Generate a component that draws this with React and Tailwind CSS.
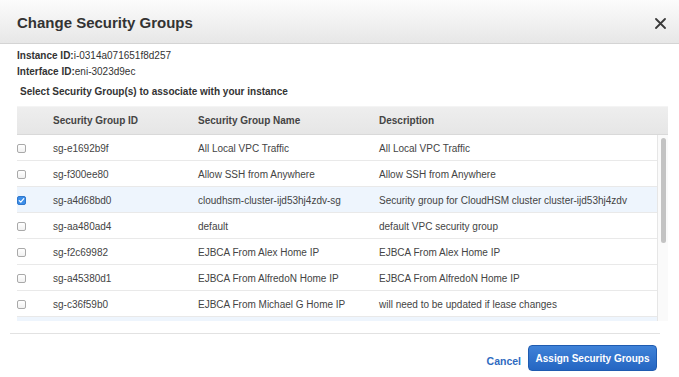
import React from "react";

const rows = [
  ["sg-e1692b9f", "All Local VPC Traffic", "All Local VPC Traffic", false],
  ["sg-f300ee80", "Allow SSH from Anywhere", "Allow SSH from Anywhere", false],
  ["sg-a4d68bd0", "cloudhsm-cluster-ijd53hj4zdv-sg", "Security group for CloudHSM cluster cluster-ijd53hj4zdv", true],
  ["sg-aa480ad4", "default", "default VPC security group", false],
  ["sg-f2c69982", "EJBCA From Alex Home IP", "EJBCA From Alex Home IP", false],
  ["sg-a45380d1", "EJBCA From AlfredoN Home IP", "EJBCA From AlfredoN Home IP", false],
  ["sg-c36f59b0", "EJBCA From Michael G Home IP", "will need to be updated if lease changes", false],
  ["", "", "", true],
];

function Checkbox({ checked }) {
  if (checked) {
    return (
      <div className="w-[9px] h-[9px] rounded-[2px] bg-[#3d8ee8] border border-[#2f77cc] flex items-center justify-center">
        <svg width="7" height="7" viewBox="0 0 7 7">
          <path d="M1.2 3.6 L2.8 5.1 L5.8 1.6" stroke="white" strokeWidth="1.2" fill="none" strokeLinecap="round" strokeLinejoin="round" />
        </svg>
      </div>
    );
  }
  return <div className="w-[9px] h-[9px] rounded-[2px] bg-gradient-to-b from-white to-[#f1f1f1] border border-[#a9a9a9]" />;
}

export default function App() {
  return (
    <div className="w-[679px] h-[377px] bg-white overflow-hidden font-['Liberation_Sans',Arial,sans-serif] text-[#333]">
      <div className="h-[44px] flex items-center justify-between pl-[17px] pr-[13px] pt-[3px] bg-gradient-to-b from-[#fcfcfc] to-[#e7e7e7] border-b border-[#d4d4d4]">
        <div className="text-[15px] font-bold text-[#333]">Change Security Groups</div>
        <svg width="11" height="11" viewBox="0 0 11 11">
          <path d="M1 1 L10 10 M10 1 L1 10" stroke="#3a3a3a" strokeWidth="1.8" strokeLinecap="round" />
        </svg>
      </div>
      <div className="pl-[17px] pt-[4px] text-[10px] leading-[16px] text-[#333]">
        <div><span className="font-bold">Instance ID:</span>i-0314a071651f8d257</div>
        <div><span className="font-bold">Interface ID:</span>eni-3023d9ec</div>
        <div className="pl-[3px] mt-[4px] font-bold">Select Security Group(s) to associate with your instance</div>
      </div>
      <div className="ml-[17px] w-[651px] mt-[6px] text-[10px] text-[#444]">
        <div className="h-[29px] flex items-center font-bold bg-gradient-to-b from-[#eeeeee] to-[#e6e6e6] border-t border-[#f4f4f4] border-b border-b-[#d9d9d9]">
          <div className="w-[36px]" />
          <div className="w-[145px]">Security Group ID</div>
          <div className="w-[181px]">Security Group Name</div>
          <div>Description</div>
        </div>
        <div className="h-[186px] flex overflow-hidden">
          <div className="flex-1 flex flex-col">
            {rows.map((r, i) => (
              <div
                key={i}
                className={`h-[26px] shrink-0 flex items-center pt-[1px] border-b border-[#e9e9e9] ${r[3] ? "bg-[#eef5fd]" : "bg-white"}`}
              >
                <div className="w-[36px]">{r[0] && <Checkbox checked={r[3]} />}</div>
                <div className="w-[145px]">{r[0]}</div>
                <div className="w-[181px] whitespace-nowrap">{r[1]}</div>
                <div className="whitespace-nowrap">{r[2]}</div>
              </div>
            ))}
          </div>
          <div className="w-[11px] bg-[#fafafa] border-l border-[#e6e6e6] pt-[3px] flex justify-center">
            <div className="w-[5px] h-[105px] rounded-full bg-[#c3c3c3]" />
          </div>
        </div>
      </div>
      <div className="ml-[10px] w-[650px] mt-[12px] border-t border-[#e2e2e2]" />
      <div className="mt-[11px] pr-[22px] flex items-center justify-end gap-[7px]">
        <div className="text-[10.5px] font-bold text-[#2f6bc1] mt-[7px]">Cancel</div>
        <div className="h-[26px] w-[129px] rounded-[4px] bg-gradient-to-b from-[#3f82d8] to-[#2566c2] border border-[#1f5bb0] flex items-center justify-center text-white text-[10px] font-bold">
          Assign Security Groups
        </div>
      </div>
    </div>
  );
}
